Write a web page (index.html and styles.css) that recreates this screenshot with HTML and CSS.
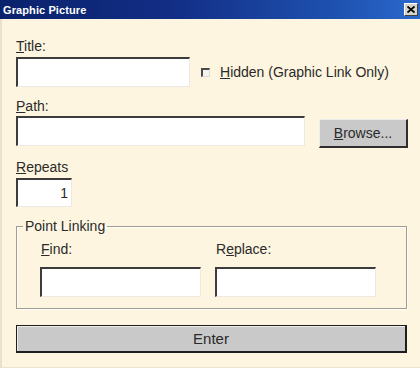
FILE: index.html
```html
<!DOCTYPE html>
<html>
<head>
<meta name="viewport" content="width=device-width, initial-scale=1">
<link rel="stylesheet" href="styles.css">
</head>
<body>

<div class="window">
    <div class="titlebar">
        <span class="caption">Graphic Picture</span>
        <span class="closeBtn">
            <svg width="8" height="7" viewBox="0 0 8 7">
                <path d="M0.5 0.5 L7.5 6.5 M7.5 0.5 L0.5 6.5" stroke="#000" stroke-width="1.8"/>
            </svg>
        </span>
    </div>

    <div class="content">
        <div class="label first"><u>T</u>itle:</div>
        <div class="row">
            <input type="text" class="field titleField">
            <label class="check">
                <span class="box"></span>
                <span><u>H</u>idden (Graphic Link Only)</span>
            </label>
        </div>

        <div class="label"><u>P</u>ath:</div>
        <div class="row pathRow">
            <input type="text" class="field pathField">
            <span class="btn browseBtn"><u>B</u>rowse...</span>
        </div>

        <div class="label"><u>R</u>epeats</div>
        <input type="text" class="field repeatsField" value="1">

        <fieldset class="group">
            <legend>Point Linking</legend>
            <div class="cols">
                <div class="col">
                    <div class="label"><u>F</u>ind:</div>
                    <input type="text" class="field linkField">
                </div>
                <div class="col">
                    <div class="label">R<u>e</u>place:</div>
                    <input type="text" class="field linkField">
                </div>
            </div>
        </fieldset>

        <span class="btn enterBtn">Enter</span>
    </div>
</div>

</body>
</html>
```

FILE: styles.css
```css
* {
    box-sizing: border-box;
}

body {
    margin: 0;
    font-family: "Liberation Sans", Arial, sans-serif;
    font-size: 14px;
    color: #2a2a2a;
}

.window {
    width: 420px;
    height: 368px;
    background: #fdf5df;
    border-left: 2px solid #e9e1c9;
    border-bottom: 1px solid #ebe3cc;
}

/* Title bar */
.titlebar {
    height: 19px;
    display: flex;
    align-items: center;
    justify-content: space-between;
    padding: 0 2px 0 3px;
    margin-left: -2px;
    background: linear-gradient(to right, #0a226c, #122d84 40%, #1e52b0 80%, #2b68cc);
}

.caption {
    color: #fff;
    font-weight: bold;
    font-size: 11px;
    letter-spacing: 0.1px;
}

.closeBtn {
    width: 14px;
    height: 13px;
    display: flex;
    align-items: center;
    justify-content: center;
    background: #d6d3cc;
    border-top: 1px solid #fff;
    border-left: 1px solid #fff;
    border-right: 1px solid #404040;
    border-bottom: 1px solid #404040;
}

/* Form body */
.content {
    padding: 0 11px 0 14px;
}

.label {
    line-height: 18px;
    height: 18px;
    margin-top: 10px;
    margin-bottom: 1px;
}

.label.first {
    margin-top: 18px;
    margin-bottom: 2px;
}

.field {
    display: block;
    margin: 0;
    height: 30px;
    padding: 0 4px;
    background: #fff;
    border-top: 2px solid #3c3c3c;
    border-left: 2px solid #3c3c3c;
    border-right: 1px solid #ece9e2;
    border-bottom: 1px solid #ece9e2;
    border-radius: 0;
    font-family: inherit;
    font-size: 14px;
    color: #2a2a2a;
    outline: none;
}

.row {
    display: flex;
    align-items: center;
}

.titleField {
    width: 174px;
}

.check {
    display: flex;
    align-items: center;
    margin-left: 11px;
    gap: 10px;
}

.box {
    width: 9px;
    height: 9px;
    background: #f6f4ef;
    border-top: 2px solid #4a4a4a;
    border-left: 2px solid #4a4a4a;
    border-right: 1px solid #dcdcdc;
    border-bottom: 1px solid #dcdcdc;
}

.pathRow {
    align-items: flex-start;
}

.pathField {
    width: 289px;
}

.btn {
    display: flex;
    align-items: center;
    justify-content: center;
    background: #c9c9c9;
    color: #2a2a2a;
}

.browseBtn {
    width: 89px;
    height: 29px;
    margin-left: 14px;
    margin-top: 3px;
    border-top: 1px solid #ededed;
    border-left: 1px solid #ededed;
    border-right: 2px solid #2e2e2e;
    border-bottom: 2px solid #2e2e2e;
}

.repeatsField {
    width: 56px;
    height: 29px;
    margin-top: 2px;
    text-align: right;
    padding-right: 3px;
}

/* Point Linking group */
.group {
    margin: 10px 0 0 0;
    padding: 0 0 11px 23px;
    width: 391px;
    border: 1px solid #a29d92;
    box-shadow: inset 1px 1px 0 #fffdf7, 1px 1px 0 #fffdf7;
}

.group legend {
    padding: 0 2px;
    margin-left: -17px;
    line-height: 18px;
}

.cols {
    display: flex;
    gap: 14px;
}

.col .label {
    margin-top: 5px;
    padding-left: 1px;
    margin-bottom: 9px;
}

.linkField {
    width: 161px;
}

.enterBtn {
    width: 391px;
    height: 28px;
    margin-top: 16px;
    font-size: 15px;
    border: 1px solid #1e1e1e;
    border-right-width: 2px;
    border-bottom-width: 2px;
    box-shadow: inset 1px 1px 0 #ececec;
}
```
